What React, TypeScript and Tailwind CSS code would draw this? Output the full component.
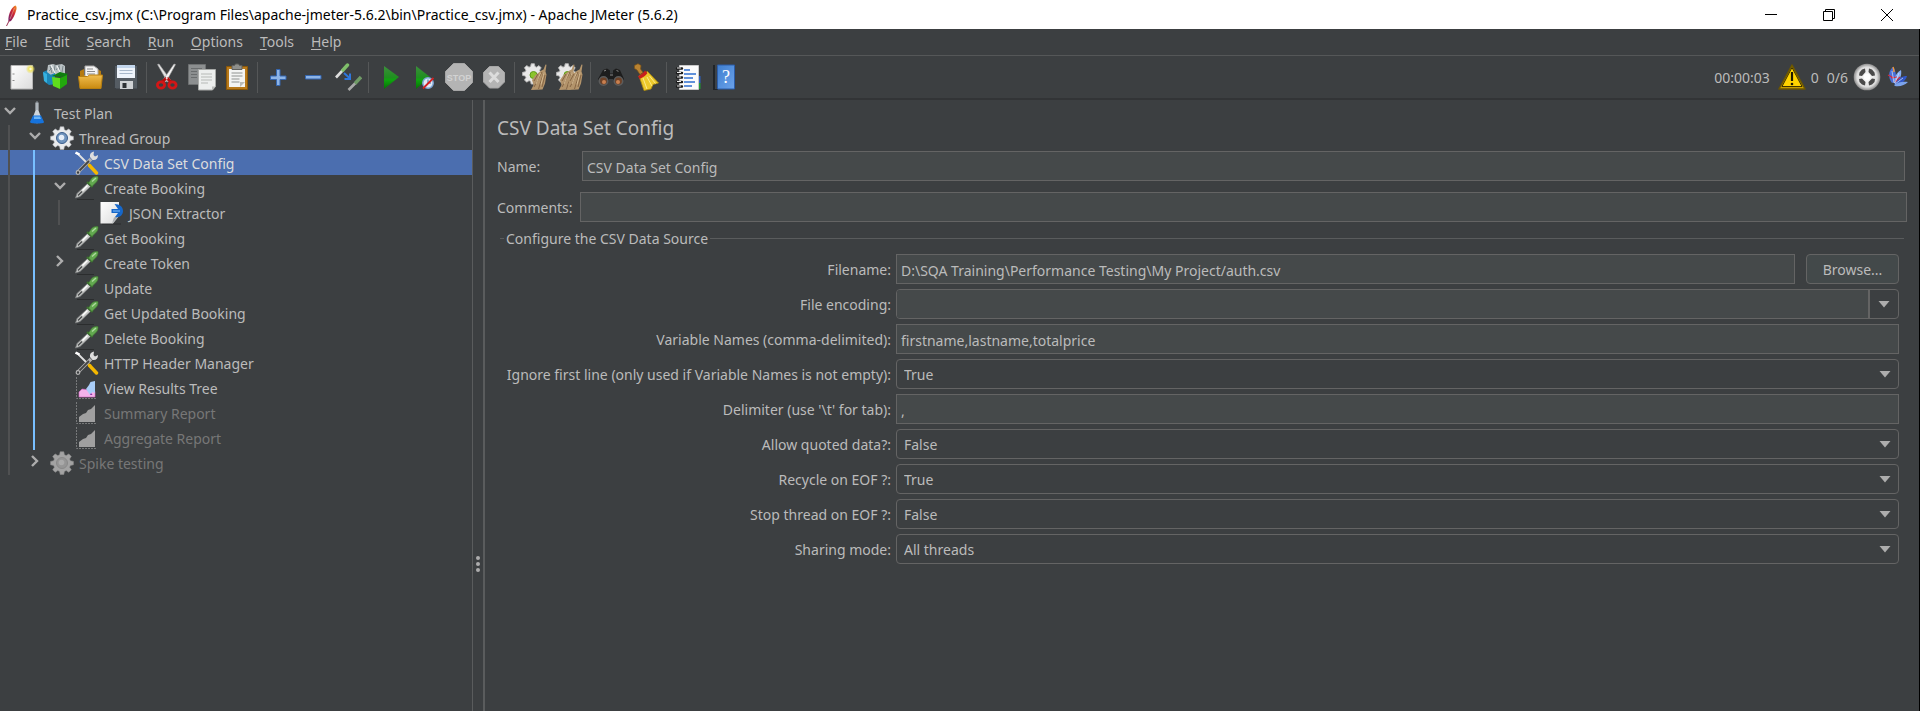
import type { ReactNode } from "react";

function Svg({ size = 28, children }: { size?: number; children: ReactNode }) {
  return (
    <svg width={size} height={size} viewBox={`0 0 ${size} ${size}`} className="shrink-0" aria-hidden="true">
      {children}
    </svg>
  );
}

function Gradients() {
  return (
    <svg width="0" height="0" className="absolute" aria-hidden="true">
      <defs>
        <linearGradient id="paper" x1="0" y1="0" x2="1" y2="1">
          <stop offset="0" stopColor="#ffffff" />
          <stop offset="1" stopColor="#dcdcdc" />
        </linearGradient>
        <radialGradient id="glow">
          <stop offset="0" stopColor="#ffffff" />
          <stop offset="0.4" stopColor="#f2e76a" />
          <stop offset="1" stopColor="#e9dc5a" stopOpacity="0.1" />
        </radialGradient>
        <linearGradient id="folder" x1="0" y1="0" x2="0" y2="1">
          <stop offset="0" stopColor="#f0bd4e" />
          <stop offset="1" stopColor="#c98a10" />
        </linearGradient>
        <linearGradient id="green" x1="0" y1="0" x2="0" y2="1">
          <stop offset="0" stopColor="#3c8f3c" />
          <stop offset="0.5" stopColor="#1f8f1f" />
          <stop offset="0.6" stopColor="#0fa50f" />
          <stop offset="1" stopColor="#067006" />
        </linearGradient>
        <linearGradient id="blue" x1="0" y1="0" x2="1" y2="1">
          <stop offset="0" stopColor="#3f7fd0" />
          <stop offset="1" stopColor="#6ba2ea" />
        </linearGradient>
        <radialGradient id="ball">
          <stop offset="0" stopColor="#ffffff" />
          <stop offset="0.75" stopColor="#dedede" />
          <stop offset="1" stopColor="#8a8a8a" />
        </radialGradient>
        <linearGradient id="feather" x1="0" y1="1" x2="1" y2="0">
          <stop offset="0" stopColor="#6a2273" />
          <stop offset="0.55" stopColor="#cc2536" />
          <stop offset="1" stopColor="#f79a23" />
        </linearGradient>
      </defs>
    </svg>
  );
}

const gearPath =
  "M10.2 0.8h3.6l.6 3 1.8.8 2.6-1.7 2.5 2.5-1.7 2.6.8 1.8 3 .6v3.4l-3 .6-.8 1.8 1.7 2.6-2.5 2.5-2.6-1.7-1.8.8-.6 3h-3.6l-.6-3-1.8-.8-2.6 1.7-2.5-2.5 1.7-2.6-.8-1.8-3-.6v-3.4l3-.6.8-1.8-1.7-2.6 2.5-2.5 2.6 1.7 1.8-.8z";

function NewIcon() {
  return (
    <Svg>
      <path d="M4 2.500h21.500v23.500H4z" fill="url(#paper)" stroke="#b5b5b5" />
      <path d="M5.500 11h2M5.500 17.500h2" stroke="#8a8a8a" />
      <circle cx="23.500" cy="6" r="4.500" fill="url(#glow)" />
    </Svg>
  );
}

function TemplatesIcon() {
  return (
    <Svg>
      <path d="M1 9l7-3 5 2v13l-6 1-4-3z" fill="#1c86b8" />
      <path d="M1 9l4 2v9l-3-2z" fill="#36b1e0" />
      <path d="M6 2l5-1 3 1 6-1 3 2v8l-5 2-9-1-4-3z" fill="#b9c1c4" />
      <path d="M8 3l2 7M13 2l-1 8M17 2l1 8M21 3l-1 6M7 8l3-3M14 7l3-4" stroke="#7b878b" strokeWidth="1" />
      <path d="M9 2l4 8M15 3l3 6" stroke="#eef1f2" strokeWidth="1.200" />
      <path d="M8 12l5-2v4l-4 8z" fill="#1c86b8" />
      <path d="M10 13l8-4 8 2-2 2-6 1z" fill="#0f7d0f" />
      <path d="M10 14l8 1v11l-7-3z" fill="#5fdc1d" />
      <path d="M18 15l7-3v9l-7 5z" fill="#22a80d" />
    </Svg>
  );
}

function OpenIcon() {
  return (
    <Svg>
      <path d="M3 8l4-2v6h13V6l4 2v17H3z" fill="#b57b12" />
      <path d="M8 3h9l4 3v10H8z" fill="#f4f4f4" stroke="#a8a8a8" />
      <path d="M10 6h6M10 8.500h8M10 11h8" stroke="#8b8b8b" />
      <path d="M1.500 13.500h9l2-1.500h13l-1.500 13.500H3z" fill="url(#folder)" stroke="#b9800f" />
    </Svg>
  );
}

function SaveIcon() {
  return (
    <Svg>
      <path d="M2.500 2.500h23v23.500H4l-1.500-1.500z" fill="#555c63" stroke="#3a3f44" />
      <path d="M5 2h18v13H5z" fill="#eef4fb" />
      <path d="M5 2h18v3H5z" fill="#c3d6ec" />
      <path d="M7.500 7.500h13M7.500 10.500h13" stroke="#a9b9cb" />
      <path d="M8 18h13v8H8z" fill="#cfd2d5" />
      <path d="M10.500 20h4v5h-4z" fill="#2e3236" />
    </Svg>
  );
}

function CutIcon() {
  return (
    <Svg>
      <path d="M4.500 1.500L6 1l11.500 16-3 2z" fill="#e4e4e4" stroke="#9c9c9c" strokeWidth="0.600" />
      <path d="M22.500 1.500L21 1 10 17l3 2z" fill="#f5f5f5" stroke="#9c9c9c" strokeWidth="0.600" />
      <path d="M13.500 15l-5 4.500M14 15l4.500 4.500" stroke="#b50d0d" strokeWidth="3" />
      <ellipse cx="8" cy="22" rx="3.600" ry="3.200" fill="none" stroke="#d31616" strokeWidth="2.800" />
      <ellipse cx="19.500" cy="22" rx="3.600" ry="3.200" fill="none" stroke="#d31616" strokeWidth="2.800" />
      <circle cx="13.700" cy="15.500" r="1" fill="#f0dada" />
    </Svg>
  );
}

function CopyIcon() {
  return (
    <Svg>
      <path d="M.5 1.500h17v20H.5z" fill="#8c8f90" stroke="#6e7172" />
      <path d="M3 5.500h11M3 8.500h6M3 11.500h6M3 14.500h6" stroke="#6a6d6e" />
      <path d="M10.500 6.500h17v17l-3 3.500h-14z" fill="#eceeed" stroke="#a9aba9" />
      <path d="M13 11h11M13 14h11M13 17h11M13 20h7" stroke="#b6b9b6" />
      <path d="M24 27v-3.500h3.500z" fill="#b9bbb9" />
    </Svg>
  );
}

function PasteIcon() {
  return (
    <Svg>
      <path d="M3.500 3.500h21v23h-21z" fill="#b87a1c" stroke="#8a5708" />
      <path d="M6 6h16v18H6z" fill="#f3f4f3" />
      <path d="M9 2.500h2.500L12.500 1h3l1 1.500H19v4H9z" fill="#8e8f8c" stroke="#5f605d" />
      <path d="M8.500 10h11M8.500 13h11M8.500 16h8M8.500 19h8" stroke="#8f9290" />
      <path d="M17 24v-5h5z" fill="#b9bbb9" />
    </Svg>
  );
}

function PlusIcon() {
  return (
    <Svg>
      <path d="M12.500 6.500h3.500v6.500h6v3.500h-6v6h-3.500v-6h-6v-3.500h6z" fill="#8db4e6" stroke="#3567b1" />
    </Svg>
  );
}

function MinusIcon() {
  return (
    <Svg>
      <path d="M6.500 12.500h15.500v3.500H6.500z" fill="#8db4e6" stroke="#3567b1" />
    </Svg>
  );
}

function ToggleIcon() {
  return (
    <Svg>
      <path d="M2 14.500L9 7" stroke="#dedede" strokeWidth="2.600" />
      <path d="M9 7l4.500-5" stroke="#7fbf6a" strokeWidth="3.400" strokeLinecap="round" />
      <path d="M10 10l5.500 5M16 10.500v5.500h-5.500" fill="none" stroke="#2f78dc" strokeWidth="2" />
      <path d="M14.500 27l7-7" stroke="#a9a9a9" strokeWidth="2.600" />
      <path d="M21 20.500l6-6.500" stroke="#6f9a66" strokeWidth="3.400" />
    </Svg>
  );
}

function StartIcon() {
  return (
    <Svg>
      <path d="M9 3l15 11L9 26z" fill="url(#green)" />
    </Svg>
  );
}

function StartNoPausesIcon() {
  return (
    <Svg>
      <path d="M6 3l14 11L6 26z" fill="url(#green)" />
      <circle cx="18" cy="20" r="5.200" fill="#dfe9f5" stroke="#7fa6d6" strokeWidth="1.500" />
      <path d="M18 20v-3.500M18 20h3" stroke="#3e6ba8" />
      <path d="M13 25.500L23.500 15" stroke="#d42121" strokeWidth="1.800" />
    </Svg>
  );
}

function StopIcon() {
  return (
    <Svg>
      <path d="M8.500.5h11l8 8v11l-8 8h-11l-8-8v-11z" fill="#b4b4b4" stroke="#a6a6a6" />
      <text x="14" y="18" textAnchor="middle" fontSize="9" fontWeight="700" fill="#d2d2d2" fontFamily="Liberation Sans, sans-serif">
        STOP
      </text>
    </Svg>
  );
}

function ShutdownIcon() {
  return (
    <Svg>
      <path d="M9.500 3.500h9l6 6v9.500l-6 6h-9l-6-6V9.500z" fill="#b4b4b4" stroke="#a6a6a6" />
      <path d="M9.500 9.500l9 9.500M18.500 9.500l-9 9.500" stroke="#dcdcdc" strokeWidth="3" />
    </Svg>
  );
}

function Brush({ x }: { x: number }) {
  return (
    <g transform={`translate(${x} 0)`}>
      <path d="M14.500 1.500l1 .3-1 6.700 1 3-1.500 9-2.500 6L0 27l2.500-5L1 17l3.500-5 6-4.500 2-1z" fill="#b3946b" />
      <path d="M11 9L3 24M12.500 10l-5 16M14 12l-3 12M7 11l-4 7" stroke="#866544" strokeWidth="1" />
      <path d="M9.500 10L5 21M13 9.500l-3 12" stroke="#dcc39c" strokeWidth="0.800" />
    </g>
  );
}

function ClearIcon() {
  return (
    <Svg>
      <g transform="translate(1 0) scale(0.9)">
        <path d={gearPath} fill="#e8e8e8" stroke="#b5b5b5" />
      </g>
      <circle cx="12.500" cy="12" r="3.500" fill="#8bc42c" stroke="#5d9a18" />
      <Brush x={10} />
    </Svg>
  );
}

function ClearAllIcon() {
  return (
    <Svg>
      <g transform="translate(0 0) scale(0.9)">
        <path d={gearPath} fill="#e8e8e8" stroke="#b5b5b5" />
      </g>
      <circle cx="11.500" cy="12" r="3.500" fill="#8bc42c" stroke="#5d9a18" />
      <Brush x={3} />
      <Brush x={11} />
    </Svg>
  );
}

function SearchIcon() {
  return (
    <Svg>
      <path d="M6 7l4-1.500 3 2v3h3v-3l3-2 4 1.500 4 9-3 5h-5l-3-5h-4l-3 5H4l-3-5z" fill="#1d1d1d" />
      <path d="M7 8l2-.8M19.500 7.500l2 .8M13 12h3" stroke="#8a8a8a" />
      <circle cx="6.500" cy="18" r="4.200" fill="#6d4127" stroke="#5c5c5c" strokeWidth="1.500" />
      <circle cx="21.500" cy="18" r="4.200" fill="#6d4127" stroke="#5c5c5c" strokeWidth="1.500" />
      <circle cx="7" cy="19" r="2" fill="#c98050" />
      <circle cx="21" cy="19" r="2" fill="#c98050" />
    </Svg>
  );
}

function BroomIcon() {
  return (
    <Svg>
      <path d="M2.500 2.500L6 .7l3 1.800-.5 3.500 2.500 3.500-3 2-3-4.500-2.500-1.500z" fill="#b98332" stroke="#7f5415" strokeWidth="0.700" />
      <path d="M7 13l8.500-4.500L26.500 20l-5.500 1.500-2 4.500-7 1.500z" fill="#ecc92b" stroke="#b08d0d" strokeWidth="0.800" />
      <path d="M11 15l4 11M15 14l5 9M17.500 13l6 7.500" stroke="#fbe98a" />
      <path d="M6 13c2.500-1 5-2.500 7-5.500l2.500 2.500c-2 3-4.500 4.500-8 6z" fill="#c8201c" />
    </Svg>
  );
}

function FunctionIcon() {
  return (
    <Svg>
      <path d="M24 13h3.500v7H24z" fill="#2b62c4" />
      <path d="M24 20h3.500v6H24z" fill="#1f9a34" />
      <path d="M6.500 2.500h19v24h-19z" fill="#fbfbfb" stroke="#c9c9c9" />
      <path d="M11 7h6M11 11h12M11 15h9M11 19h11M11 23h8" stroke="#2f6fd0" strokeWidth="1.400" />
      <path d="M4 5.500h5M4 10h5M4 14.500h5M4 19h5M4 23.500h5" stroke="#1b1b1b" strokeWidth="2.400" strokeLinecap="round" />
      <path d="M4 5h4M4 9.500h4M4 14h4M4 18.500h4M4 23h4" stroke="#e6e6e6" strokeWidth="1" />
    </Svg>
  );
}

function HelpIcon() {
  return (
    <Svg>
      <path d="M5 2h5v25H5z" fill="#202428" />
      <path d="M7 2h2v24H7z" fill="#3c4248" />
      <path d="M9.500 2h17v24h-17z" fill="url(#blue)" stroke="#2b5ca8" />
      <text x="18" y="20" textAnchor="middle" fontSize="18" fill="#ffffff" fontFamily="Liberation Serif, serif">
        ?
      </text>
    </Svg>
  );
}

function WarningIcon() {
  return (
    <Svg>
      <path d="M14 2L1 26h26z" fill="#c79f00" stroke="#6b5600" strokeWidth="1.500" strokeLinejoin="round" />
      <path d="M14 4.500L4 23.500h20z" fill="#ffd400" stroke="#2c2400" strokeWidth="0.900" />
      <path d="M14 9v9" stroke="#1c1800" strokeWidth="2.200" />
      <circle cx="14" cy="21" r="1.300" fill="#1c1800" />
    </Svg>
  );
}

function ThreadsIcon() {
  return (
    <Svg>
      <circle cx="14" cy="14" r="13.300" fill="url(#ball)" />
      <path d="M12 5.500L9 6.500 6.500 9.500l-.5 3 3 .5 3.500-4zM16 5.500l3 1 2.500 3 .5 3-3 .5-3.500-4zM6 16l3-.5 3.500 3.500-.5 3.500-3-1-2.500-2.500zM22 16l-3-.5-3.500 3.500.5 3.500 3-1 2.500-2.500z" fill="#4a4a4a" />
      <circle cx="14" cy="14" r="3.200" fill="#ffffff" />
    </Svg>
  );
}

function LogoIcon() {
  return (
    <Svg size={24}>
      <path d="M6 18C2 13 2 6 7 2c3 4 4 10 2 15z" fill="#4a6fd8" />
      <path d="M8 18c0-6 3-11 7-13 1 5-1 10-5 14z" fill="#86aef2" />
      <path d="M8 19c4-6 8-8 13-8-1 4-5 8-11 9z" fill="#3157c8" />
      <path d="M8 20c4-3 9-4 14-3-3 3-8 5-13 4z" fill="#7ba3ec" />
      <path d="M2 10l6 3M5 13l6-1M9 17l5-5" stroke="#d32c3c" strokeWidth="1.200" />
      <path d="M7 2c1 2 1 3 1 5" stroke="#f0973a" strokeWidth="1.500" />
      <path d="M6 6c1 4 1 8 2 12M13 8l-4 10M17 13l-8 6" stroke="#dce8ff" strokeWidth="0.700" />
    </Svg>
  );
}

function FeatherIcon() {
  return (
    <Svg size={24}>
      <path d="M15.500 2.500c1.500 1 1.500 3 0 7-1 3-2.500 6-4.500 8.500-1 .5-2 .5-2.500 0-.5-3 .5-7.500 2.500-11 1.500-2.500 3-4 4.500-4.500z" fill="url(#feather)" />
      <path d="M9.500 17l-3 6" stroke="#9a3050" strokeWidth="1" />
      <path d="M14.500 5l-4.500 11" stroke="#f6c0a0" strokeWidth="0.500" />
    </Svg>
  );
}

function TestPlanIcon() {
  return (
    <Svg size={24}>
      <path d="M10.500 1.500h3v8l4.500 11.500c0 1.500-12 1.500-12 0l4.500-11.500z" fill="#cfd6dc" />
      <path d="M12 0v9" stroke="#8d969d" strokeWidth="1" />
      <path d="M8 14.500h8l3 6.500c.5 2-14 2-14 0z" fill="#1673dd" />
      <path d="M9 15.500h6l1 2.500H9z" fill="#6bb5f7" />
    </Svg>
  );
}

function GearIcon({ off = false }: { off?: boolean }) {
  return (
    <Svg size={24}>
      <path d={gearPath} fill={off ? "#a3a3a3" : "#e9ebed"} stroke={off ? "#8c8c8c" : "#b3b6b9"} strokeWidth="0.600" />
      <circle cx="12" cy="12" r="5.500" fill={off ? "#959595" : "#6f93bd"} stroke={off ? "#898989" : "#3c5f8d"} />
      <circle cx="11.500" cy="11.500" r="2.800" fill={off ? "#a9a9a9" : "#e6eef8"} />
    </Svg>
  );
}

function ConfigIcon() {
  return (
    <Svg size={24}>
      <path d="M2 2l10 10" stroke="#e2e2e2" strokeWidth="1.800" />
      <path d="M.5 1.500l4 2" stroke="#ffffff" strokeWidth="2.500" />
      <path d="M12 12l4 3" stroke="#a77a00" strokeWidth="2.500" />
      <path d="M14.500 14.500l7 7.500" stroke="#f4b800" strokeWidth="3.400" strokeLinecap="round" />
      <path d="M3 21L16 8" stroke="#b0b0b0" strokeWidth="3.600" />
      <path d="M3 21L14 10" stroke="#454545" strokeWidth="1.800" />
      <circle cx="3" cy="21.500" r="1.800" fill="#3c3f41" stroke="#b5b5b5" strokeWidth="1.200" />
      <path d="M19 .5c-3 .5-4.500 2.500-4 5.500l2.500 3c3.500.5 5.500-1 5.500-5l-3 1.500-1.500-1.500z" fill="#dedede" />
    </Svg>
  );
}

function SamplerIcon() {
  return (
    <Svg size={24}>
      <path d="M2 23.500h17" stroke="#2b2d2e" strokeWidth="1" />
      <path d="M.5 22l1.500-4.500L12.500 7.500l3 3L5 20.500z" fill="#c9cbc9" stroke="#77797a" strokeWidth="0.800" />
      <path d="M3 19.500l4-4" stroke="#4c4e4f" strokeWidth="1.600" />
      <path d="M7.500 14.500l5-5" stroke="#ffffff" strokeWidth="1.400" />
      <path d="M12 6l5.500 5" stroke="#3c702f" strokeWidth="2.200" />
      <path d="M13.500 7l3-4.500C18 .8 21.500 0 22.800.5c.7 1 .2 4-1.300 5.500L17 10.500z" fill="#62a84f" stroke="#3c702f" strokeWidth="0.600" />
      <path d="M17 5.500l4-3.500" stroke="#aedb9e" strokeWidth="1.400" />
    </Svg>
  );
}

function ExtractorIcon() {
  return (
    <Svg size={24}>
      <path d="M2 23h19" stroke="#2b2d2e" />
      <path d="M.5 1h18.500v14l-6 7.500H.5z" fill="url(#paper)" />
      <path d="M12 22.500l2-6 5.500-2z" fill="#a9adb0" />
      <path d="M14.500 3c5.500 0 8.500 3 8.500 7s-3.500 7-8 6l3-4h-6.500V8H18z" fill="#1667c9" />
      <path d="M13 10h7" stroke="#6eb0f5" strokeWidth="1.200" />
    </Svg>
  );
}

function ChartIcon({ off = false }: { off?: boolean }) {
  return (
    <Svg size={24}>
      <path d="M1.500 1v21.500H21" fill="none" stroke="#77797a" strokeDasharray="2 1" />
      {off ? (
        <path d="M4 21v-5l4-3 3-1 2-3 3-1 4-4v17z" fill="#a0a0a0" />
      ) : (
        <>
          <path d="M4 21v-5l3-3 4 .5 4 2 3-1 2 1V21z" fill="#f3b2ea" stroke="#d765c3" strokeWidth="0.600" />
          <path d="M11 13l3-4 1.500-3 4.500-1v12l-2.500-1-2.500 3-2-3z" fill="#a9cdf8" />
          <path d="M15 19l1-2 1.500 2z" fill="#8a2aa0" />
        </>
      )}
    </Svg>
  );
}

type Item = {
  label: string;
  depth: number;
  icon: ReactNode;
  open?: boolean;
  off?: boolean;
  selected?: boolean;
};

const tree: Item[] = [
  { label: "Test Plan", depth: 0, icon: <TestPlanIcon />, open: true },
  { label: "Thread Group", depth: 1, icon: <GearIcon />, open: true },
  { label: "CSV Data Set Config", depth: 2, icon: <ConfigIcon />, selected: true },
  { label: "Create Booking", depth: 2, icon: <SamplerIcon />, open: true },
  { label: "JSON Extractor", depth: 3, icon: <ExtractorIcon /> },
  { label: "Get Booking", depth: 2, icon: <SamplerIcon /> },
  { label: "Create Token", depth: 2, icon: <SamplerIcon />, open: false },
  { label: "Update", depth: 2, icon: <SamplerIcon /> },
  { label: "Get Updated Booking", depth: 2, icon: <SamplerIcon /> },
  { label: "Delete Booking", depth: 2, icon: <SamplerIcon /> },
  { label: "HTTP Header Manager", depth: 2, icon: <ConfigIcon /> },
  { label: "View Results Tree", depth: 2, icon: <ChartIcon /> },
  { label: "Summary Report", depth: 2, icon: <ChartIcon off />, off: true },
  { label: "Aggregate Report", depth: 2, icon: <ChartIcon off />, off: true },
  { label: "Spike testing", depth: 1, icon: <GearIcon off />, open: false, off: true },
];

function Chevron({ open }: { open: boolean }) {
  return (
    <svg width="14" height="14" viewBox="0 0 14 14" fill="none" stroke="#adadad" strokeWidth="2.400" aria-hidden="true">
      <path d={open ? "M2 4l5 5 5-5" : "M4 2l5 5-5 5"} />
    </svg>
  );
}

function TreeRow({ item }: { item: Item }) {
  const guides = Array.from({ length: item.depth }, (_, i) => i);
  return (
    <li
      role="treeitem"
      aria-level={item.depth + 1}
      aria-selected={!!item.selected}
      className={`flex h-[25px] items-center ${item.selected ? "bg-[#4b6eaf] text-[#dddddd]" : item.off ? "text-[#777777]" : ""}`}
    >
      {guides.map((g) => (
        <span key={g} className="h-full w-[25px] shrink-0 pl-2">
          <span className={`block h-full w-0.5 ${g === 1 ? "bg-[#78bfff]" : "bg-[#505152]"}`} />
        </span>
      ))}
      <span className="flex w-[25px] shrink-0 pb-1 pl-[3px]">{item.open !== undefined && <Chevron open={item.open} />}</span>
      {item.icon}
      <span className="pt-0.5 pl-[5px] whitespace-nowrap">{item.label}</span>
    </li>
  );
}

const toolGroups: { label: string; icon: ReactNode }[][] = [
  [
    { label: "New", icon: <NewIcon /> },
    { label: "Templates", icon: <TemplatesIcon /> },
    { label: "Open", icon: <OpenIcon /> },
    { label: "Save", icon: <SaveIcon /> },
  ],
  [
    { label: "Cut", icon: <CutIcon /> },
    { label: "Copy", icon: <CopyIcon /> },
    { label: "Paste", icon: <PasteIcon /> },
  ],
  [
    { label: "Expand All", icon: <PlusIcon /> },
    { label: "Collapse All", icon: <MinusIcon /> },
    { label: "Toggle", icon: <ToggleIcon /> },
  ],
  [
    { label: "Start", icon: <StartIcon /> },
    { label: "Start no pauses", icon: <StartNoPausesIcon /> },
    { label: "Stop", icon: <StopIcon /> },
    { label: "Shutdown", icon: <ShutdownIcon /> },
  ],
  [
    { label: "Clear", icon: <ClearIcon /> },
    { label: "Clear All", icon: <ClearAllIcon /> },
  ],
  [
    { label: "Search", icon: <SearchIcon /> },
    { label: "Reset Search", icon: <BroomIcon /> },
  ],
  [
    { label: "Function Helper Dialog", icon: <FunctionIcon /> },
    { label: "Help", icon: <HelpIcon /> },
  ],
];

const menus = ["File", "Edit", "Search", "Run", "Options", "Tools", "Help"];

const inputClass = "h-[30px] w-full min-w-0 border border-[#646464] bg-[#45494a] px-1 pt-0.5 outline-none";

function Arrow() {
  return (
    <svg width="12" height="7" viewBox="0 0 12 7" aria-hidden="true">
      <path d="M.5 0h11L6 6.500z" fill="#adadad" />
    </svg>
  );
}

function FieldRow({ id, label, children }: { id: string; label: string; children: ReactNode }) {
  return (
    <div className="grid grid-cols-[392px_minmax(0,1fr)] items-center gap-[5px]">
      <label htmlFor={id} className="pt-0.5 text-right whitespace-nowrap">
        {label}
      </label>
      {children}
    </div>
  );
}

function SelectRow({ id, label, value, options }: { id: string; label: string; value: string; options: string[] }) {
  return (
    <FieldRow id={id} label={label}>
      <div className="relative">
        <select
          id={id}
          defaultValue={value}
          className="block h-[30px] w-full appearance-none rounded-[4px] border border-[#646464] bg-[#3c3f41] px-[7px] pt-0.5 outline-none"
        >
          {options.map((o) => (
            <option key={o}>{o}</option>
          ))}
        </select>
        <span className="pointer-events-none absolute inset-y-0 right-2 flex items-center">
          <Arrow />
        </span>
      </div>
    </FieldRow>
  );
}

export default function App() {
  return (
    <div className="flex min-h-screen flex-col bg-[#3c3f41] font-['Noto_Sans','Open_Sans',sans-serif] text-[14px] leading-5 text-[#bbbbbb]">
      <Gradients />
      <header className="flex h-[29px] items-center bg-white pr-1 text-black">
        <FeatherIcon />
        <h1 className="grow pl-[3px] whitespace-nowrap">
          Practice_csv.jmx (C:\Program Files\apache-jmeter-5.6.2\bin\Practice_csv.jmx) - Apache JMeter (5.6.2)
        </h1>
        <button aria-label="Minimize" className="flex w-[58px] justify-center">
          <svg width="14" height="14" viewBox="0 0 14 14" stroke="#000" fill="none" aria-hidden="true">
            <path d="M1 6.500h12" />
          </svg>
        </button>
        <button aria-label="Restore" className="flex w-[58px] justify-center">
          <svg width="14" height="14" viewBox="0 0 14 14" stroke="#000" fill="none" aria-hidden="true">
            <path d="M1.500 3.500h9v9h-9zM3.500 3.500v-2h9v9h-2" />
          </svg>
        </button>
        <button aria-label="Close" className="flex w-[58px] justify-center">
          <svg width="14" height="14" viewBox="0 0 14 14" stroke="#000" fill="none" aria-hidden="true">
            <path d="M1 1l12 12M13 1L1 13" />
          </svg>
        </button>
      </header>

      <div className="flex grow flex-col border-r border-black">
        <nav className="flex h-[27px] items-center gap-[17px] border-b border-[#555758] pl-[5px]">
          {menus.map((m) => (
            <button key={m}>
              <span className="underline decoration-1 underline-offset-2">{m[0]}</span>
              {m.slice(1)}
            </button>
          ))}
        </nav>

        <div className="flex h-[42px] items-center pl-[3px]">
          {toolGroups.map((group, i) => (
            <div key={i} className="flex items-center">
              {i > 0 && <span className="mr-0.5 ml-[3px] h-[31px] w-px bg-[#555758]" />}
              {group.map((t) => (
                <button key={t.label} aria-label={t.label} className="flex w-[35px] justify-center">
                  {t.icon}
                </button>
              ))}
            </div>
          ))}
          <div className="ml-auto flex items-center gap-2 pr-[9px]">
            <span className="pt-0.5">00:00:03</span>
            <div className="flex items-center gap-[5px]">
              <WarningIcon />
              <span className="pt-0.5">0</span>
            </div>
            <div className="flex items-center gap-[5px]">
              <span className="pt-0.5">0/6</span>
              <ThreadsIcon />
              <LogoIcon />
            </div>
          </div>
        </div>

        <div className="flex grow border-t-2 border-[#323436]">
          <aside className="w-[473px] shrink-0 border-r border-[#5a5c5d]">
            <ul role="tree" aria-label="Test plan">
              {tree.map((item) => (
                <TreeRow key={item.label} item={item} />
              ))}
            </ul>
          </aside>
          <div role="separator" className="flex w-[10px] shrink-0 flex-col items-center justify-end gap-0.5 pb-[139px]">
            <span className="size-1 rounded-full bg-[#adadad]" />
            <span className="size-1 rounded-full bg-[#adadad]" />
            <span className="size-1 rounded-full bg-[#adadad]" />
          </div>

          <main className="min-w-0 grow border-l-2 border-[#5a5c5d] pt-3.5 pr-3 pl-3">
            <h2 className="text-[19px] leading-7">CSV Data Set Config</h2>
            <div className="mt-[9px] flex items-center pr-0.5">
              <label htmlFor="name" className="w-[85px] shrink-0 pt-0.5">
                Name:
              </label>
              <input id="name" defaultValue="CSV Data Set Config" className={inputClass} />
            </div>
            <div className="mt-[11px] flex items-center">
              <label htmlFor="comments" className="w-[83px] shrink-0 pt-0.5">
                Comments:
              </label>
              <input id="comments" className={inputClass} />
            </div>
            <fieldset className="mt-[5px] mr-[3px] ml-[3px] border-t border-[#5a5c5d] pr-[5px]">
              <legend className="ml-1 px-0.5 pt-0.5">Configure the CSV Data Source</legend>
              <div className="-ml-px flex flex-col gap-[5px] pt-[5px]">
                <FieldRow id="filename" label="Filename:">
                  <div className="flex gap-[11px]">
                    <input id="filename" defaultValue="D:\SQA Training\Performance Testing\My Project/auth.csv" className={inputClass} />
                    <button className="h-[30px] w-[93px] shrink-0 rounded-[4px] border border-[#646464] bg-[#43494a] pt-0.5">Browse...</button>
                  </div>
                </FieldRow>
                <FieldRow id="encoding" label="File encoding:">
                  <div className="flex h-[30px] overflow-hidden rounded-[4px] border border-[#646464]">
                    <input id="encoding" className="min-w-0 grow bg-[#45494a] px-1 outline-none" />
                    <button aria-label="Show encodings" className="flex w-[30px] items-center justify-center border-l-2 border-[#646464]">
                      <Arrow />
                    </button>
                  </div>
                </FieldRow>
                <FieldRow id="variables" label="Variable Names (comma-delimited):">
                  <input id="variables" defaultValue="firstname,lastname,totalprice" className={inputClass} />
                </FieldRow>
                <SelectRow id="ignore" label="Ignore first line (only used if Variable Names is not empty):" value="True" options={["True", "False"]} />
                <FieldRow id="delimiter" label="Delimiter (use '\t' for tab):">
                  <input id="delimiter" defaultValue="," className={inputClass} />
                </FieldRow>
                <SelectRow id="quoted" label="Allow quoted data?:" value="False" options={["True", "False"]} />
                <SelectRow id="recycle" label="Recycle on EOF ?:" value="True" options={["True", "False"]} />
                <SelectRow id="stop" label="Stop thread on EOF ?:" value="False" options={["True", "False"]} />
                <SelectRow
                  id="sharing"
                  label="Sharing mode:"
                  value="All threads"
                  options={["All threads", "Current thread group", "Current thread"]}
                />
              </div>
            </fieldset>
          </main>
        </div>
      </div>
    </div>
  );
}
